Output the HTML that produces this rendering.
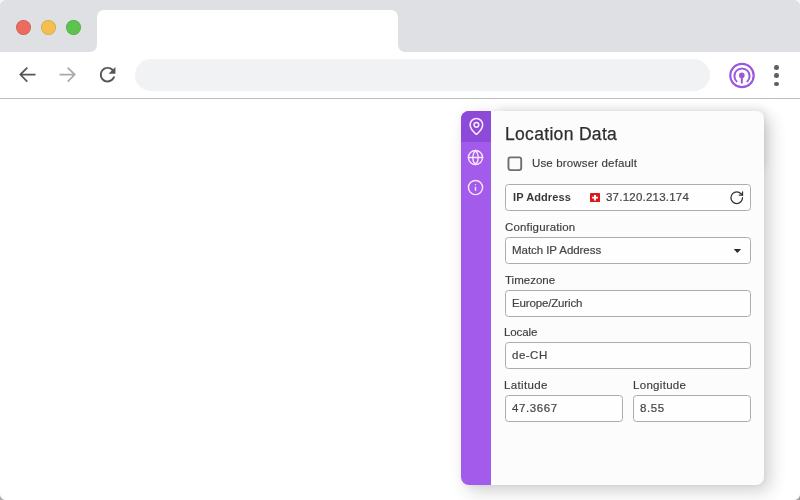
<!DOCTYPE html>
<html><head><meta charset="utf-8">
<style>
*{margin:0;padding:0;box-sizing:border-box}
html,body{width:800px;height:500px;overflow:hidden;background:#fff;font-family:"Liberation Sans",sans-serif}
.abs{position:absolute}
#topbar{left:0;top:0;width:800px;height:20px;background:#dfe0e4}
.light{width:15px;height:15px;border-radius:50%;top:19.5px;box-shadow:inset 0 0 0 0.8px rgba(0,0,0,0.13)}
#tab{left:97px;top:10px;width:301px;height:42px;background:#fff;border-radius:7px 7px 0 0}
#gl{left:0;top:10px;width:97px;height:42px;background:#dfe0e4;border-radius:0 0 7px 0}
#gr{left:398px;top:10px;width:402px;height:42px;background:#dfe0e4;border-radius:0 0 0 7px}
#toolbar{left:0;top:0;width:800px;height:98px;background:#fff}
#line{left:0;top:97.5px;width:800px;height:1px;background:#bdbdbd}
#addr{left:135px;top:59px;width:575px;height:32px;border-radius:16px;background:#f1f2f4}
#popup{left:461px;top:111px;width:303px;height:374px;border-radius:8px;background:#fcfcfc;box-shadow:0 1px 5px rgba(0,0,0,0.04),6px 6px 17px rgba(0,0,0,0.19);overflow:hidden}
#side{left:0;top:0;width:30px;height:374px;background:#a25bea}
#active{left:0;top:0;width:30px;height:30.5px;background:#8d4ad8}
.t{position:absolute;white-space:nowrap;color:#3a3a3a;line-height:1;will-change:transform}
.lbl{color:#3c3c3c;-webkit-text-stroke:0.15px #3c3c3c}
.ttl{color:#2e2e2e;-webkit-text-stroke:0.25px #2e2e2e}
.box{position:absolute;border:1px solid #acacac;border-radius:3.5px;background:#fefefe}
.val{color:#444;-webkit-text-stroke:0.2px #444}
</style></head>
<body>
<div id="toolbar" class="abs"></div>
<div id="topbar" class="abs"></div>
<div id="gl" class="abs"></div>
<div id="gr" class="abs"></div>
<div id="tab" class="abs"></div>
<div class="abs light" style="left:16px;background:#ed6a5e"></div>
<div class="abs light" style="left:41px;background:#f5bf4f"></div>
<div class="abs light" style="left:66px;background:#5cc34e"></div>
<div id="line" class="abs"></div>
<div id="addr" class="abs"></div>

<!-- nav icons -->
<svg class="abs" style="left:10px;top:60px" width="30" height="30" viewBox="10 60 30 30">
  <path d="M35.5 74.6H20.5M27.3 67.6L20.3 74.6l7 7" fill="none" stroke="#555" stroke-width="1.7"/>
</svg>
<svg class="abs" style="left:50px;top:60px" width="30" height="30" viewBox="50 60 30 30">
  <path d="M59.5 74.6H74.5M67.7 67.6L74.7 74.6l-7 7" fill="none" stroke="#a9a9a9" stroke-width="1.7"/>
</svg>
<svg class="abs" style="left:96.1px;top:63.1px" width="23.3" height="23.3" viewBox="0 0 24 24">
  <path d="M17.65 6.35C16.2 4.9 14.21 4 12 4c-4.42 0-7.99 3.58-7.99 8s3.57 8 7.99 8c3.73 0 6.84-2.55 7.73-6h-2.08c-.82 2.33-3.04 4-5.65 4-3.31 0-6-2.690-6-6s2.69-6 6-6c1.66 0 3.14.69 4.22 1.780L13 11h7V4l-2.35 2.35z" fill="#555"/>
</svg>
<!-- extension icon -->
<svg class="abs" style="left:728px;top:61px" width="28" height="28" viewBox="0 0 28 28">
  <circle cx="14" cy="14.5" r="11.7" fill="none" stroke="#9a58dc" stroke-width="2.2"/>
  <path d="M8.63 20.37A7.6 7.6 0 1 1 19.37 20.37" fill="none" stroke="#9a58dc" stroke-width="2" stroke-linecap="round"/>
  <circle cx="13.8" cy="14.4" r="2.8" fill="#9a58dc"/>
  <path d="M13.8 14.4V21.8" stroke="#9a58dc" stroke-width="2" stroke-linecap="round"/>
</svg>
<!-- menu dots -->
<div class="abs" style="left:774px;top:65px;width:4.6px;height:4.6px;border-radius:50%;background:#606060"></div>
<div class="abs" style="left:774px;top:73px;width:4.6px;height:4.6px;border-radius:50%;background:#606060"></div>
<div class="abs" style="left:774px;top:81.5px;width:4.6px;height:4.6px;border-radius:50%;background:#606060"></div>

<div class="abs" style="left:495px;top:111px;width:269px;height:60px;border-radius:6px;box-shadow:2px -3px 9px rgba(0,0,0,0.07)"></div>
<div id="popup" class="abs">
  <div id="side" class="abs"></div>
  <div id="active" class="abs"></div>
  <!-- pin -->
  <svg class="abs" style="left:5.8px;top:6.1px" width="18.8" height="18.8" viewBox="0 0 24 24" fill="none" stroke="#fce6fc" stroke-width="2" stroke-linecap="round" stroke-linejoin="round">
    <path d="M20 10c0 4.993-5.539 10.193-7.399 11.799a1 1 0 0 1-1.202 0C9.539 20.193 4 14.993 4 10a8 8 0 0 1 16 0"/><circle cx="12" cy="10" r="3"/>
  </svg>
  <!-- globe -->
  <svg class="abs" style="left:6.3px;top:37.6px" width="17" height="17" viewBox="0 0 24 24" fill="none" stroke="#fce6fc" stroke-width="2" stroke-linecap="round" stroke-linejoin="round">
    <circle cx="12" cy="12" r="10"/><path d="M12 2a14.5 14.5 0 0 0 0 20 14.5 14.5 0 0 0 0-20"/><path d="M2 12h20"/>
  </svg>
  <!-- info -->
  <svg class="abs" style="left:6.3px;top:68.2px" width="17" height="17" viewBox="0 0 24 24" fill="none" stroke="#fce6fc" stroke-width="2" stroke-linecap="round" stroke-linejoin="round">
    <circle cx="12" cy="12" r="10"/><path d="M12 16v-4"/><path d="M12 8h.01"/>
  </svg>

  <div class="t ttl" style="left:43.90px;top:14.79px;font-size:17.5px;letter-spacing:0.32px;">Location Data</div>
  <svg class="abs" style="left:44px;top:43px" width="20" height="20" viewBox="0 0 20 20"><rect x="3.45" y="3.35" width="12.75" height="12.75" rx="2" fill="none" stroke="#6e6e6e" stroke-width="1.9"/></svg>
  <div class="t lbl" style="left:70.70px;top:47.27px;font-size:11.5px;letter-spacing:0.15px;">Use browser default</div>
  <div class="box" style="left:44px;top:73px;width:246px;height:27px"></div>
  <div class="t lbl" style="left:51.70px;top:80.69px;font-size:11px;letter-spacing:0.1px;font-weight:bold;color:#3a3a3a;-webkit-text-stroke:0">IP Address</div>
  <svg class="abs" style="left:129px;top:81.7px" width="10" height="9.3" viewBox="0 0 10 9.3">
    <rect width="10" height="9.3" rx="0.8" fill="#dc1a1e"/>
    <path d="M5 1.9v5.5M2.1 4.65h5.8" stroke="#fff" stroke-width="1.9"/>
  </svg>
  <div class="t val" style="left:144.50px;top:81.27px;font-size:11.5px;letter-spacing:0.22px;">37.120.213.174</div>
  <svg class="abs" style="left:267.67px;top:79.4px" width="15.46" height="15.46" viewBox="0 0 24 24" fill="none" stroke="#333" stroke-width="2" stroke-linecap="round" stroke-linejoin="round">
    <path d="M21 12a9 9 0 1 1-9-9c2.52 0 4.93 1 6.74 2.74L21 8"/><path d="M21 3v5h-5"/>
  </svg>
  <div class="t lbl" style="left:43.80px;top:111.27px;font-size:11.5px;letter-spacing:0.15px;">Configuration</div>
  <div class="box" style="left:44px;top:126px;width:246px;height:27px"></div>
  <div class="t val" style="left:51.10px;top:134.27px;font-size:11.5px;letter-spacing:-0.05px;">Match IP Address</div>
  <svg class="abs" style="left:272px;top:137px" width="10" height="6" viewBox="0 0 10 6"><path d="M0.7 1.1H8.1L4.4 4.9z" fill="#2a2a2a"/></svg>
  <div class="t lbl" style="left:44.30px;top:164.27px;font-size:11.5px;letter-spacing:0.0px;">Timezone</div>
  <div class="box" style="left:44px;top:179px;width:246px;height:27px"></div>
  <div class="t val" style="left:50.80px;top:187.27px;font-size:11.5px;letter-spacing:-0.15px;">Europe/Zurich</div>
  <div class="t lbl" style="left:43.30px;top:216.27px;font-size:11.5px;letter-spacing:-0.1px;">Locale</div>
  <div class="box" style="left:44px;top:231px;width:246px;height:27px"></div>
  <div class="t val" style="left:50.80px;top:239.27px;font-size:11.5px;letter-spacing:0.5px;">de-CH</div>
  <div class="t lbl" style="left:43.30px;top:269.27px;font-size:11.5px;letter-spacing:0.35px;">Latitude</div>
  <div class="box" style="left:44px;top:284px;width:117.5px;height:27px"></div>
  <div class="t val" style="left:51.30px;top:292.27px;font-size:11.5px;letter-spacing:0.6px;">47.3667</div>
  <div class="t lbl" style="left:172.05px;top:269.27px;font-size:11.5px;letter-spacing:0.3px;">Longitude</div>
  <div class="box" style="left:172.25px;top:284px;width:117.25px;height:27px"></div>
  <div class="t val" style="left:178.80px;top:292.27px;font-size:11.5px;letter-spacing:0.55px;">8.55</div>
  </div>
<div class="abs" style="left:0;top:0;width:6px;height:6px;background:radial-gradient(circle at 6px 6px,transparent 5.5px,#f6f6f6 6.5px)"></div>
<div class="abs" style="left:794px;top:0;width:6px;height:6px;background:radial-gradient(circle at 0 6px,transparent 5.5px,#f6f6f6 6.5px)"></div>
<div class="abs" style="left:0;top:494px;width:6px;height:6px;background:radial-gradient(circle at 6px 0,transparent 5.5px,#b0b0b0 6.5px)"></div>
<div class="abs" style="left:794px;top:494px;width:6px;height:6px;background:radial-gradient(circle at 0 0,transparent 5.5px,#a0a0a0 6.5px)"></div>
</body></html>
